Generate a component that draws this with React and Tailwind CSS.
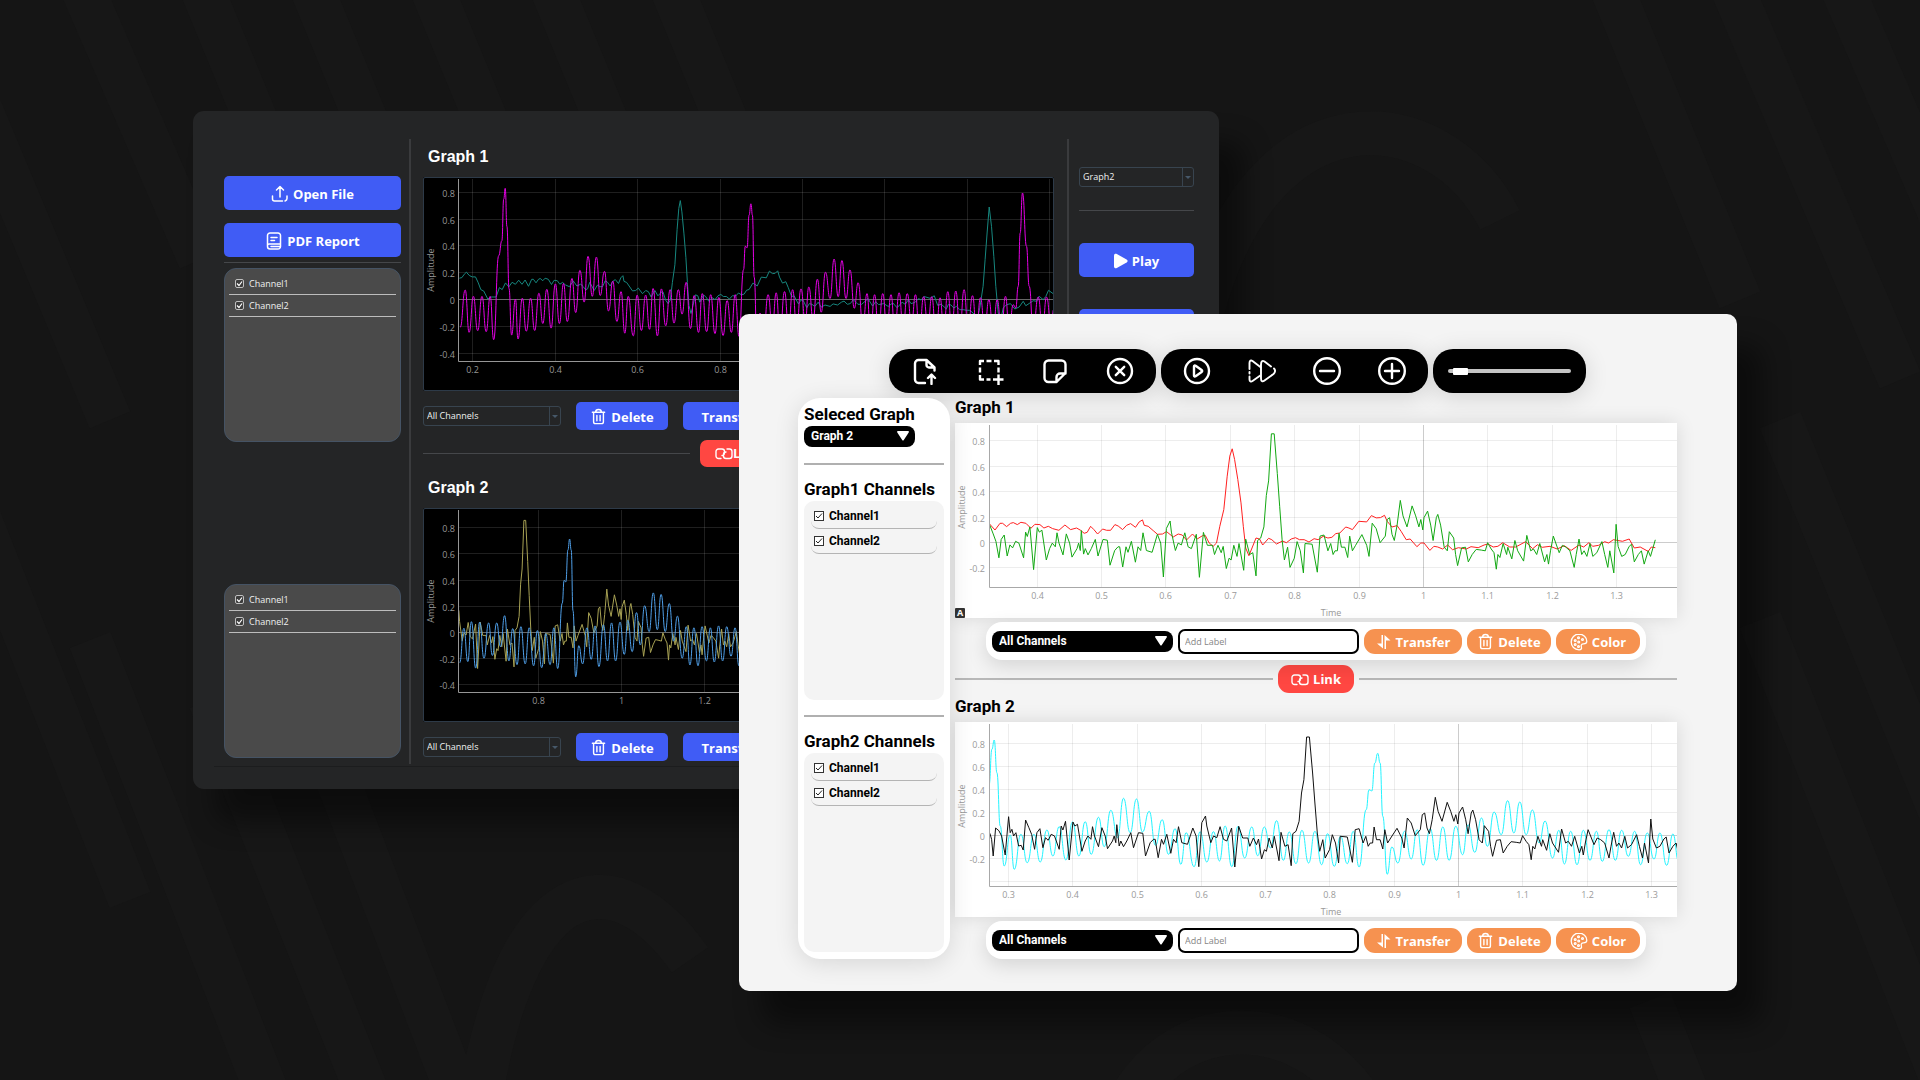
import React from "react";

/* ---------- signals: flat lists of x, y positions on a measured trace ---------- */

function fromTrace(list, tRef, xRef, xScale, yZero, yScale) {
  const out = [];
  for (let i = 0; i < list.length; i += 2) {
    out.push([tRef + (list[i] - xRef) / xScale, (yZero - list[i + 1]) / yScale]);
  }
  return out;
}

const SMOOTH = [
  [0.166, 0.155], [0.172, 0.16], [0.178, 0.185], [0.183, 0.2], [0.19, 0.175], [0.197, 0.165], [0.205, 0.165],
  [0.212, 0.12], [0.218, 0.07], [0.225, 0.06], [0.235, 0.0], [0.243, 0.015], [0.255, 0.015], [0.263, 0.085],
  [0.27, 0.07], [0.278, 0.12], [0.286, 0.09], [0.294, 0.125], [0.302, 0.11], [0.31, 0.14], [0.318, 0.11],
  ...fromTrace(
    [
      749, 643, 765, 661, 780, 641, 788, 641, 800, 651, 812, 641, 820, 639, 832, 645, 843, 638, 858, 641, 873, 656,
      885, 644, 900, 645, 912, 655, 925, 650, 938, 657, 957, 662, 975, 646, 992, 660, 1010, 655, 1022, 662, 1033, 671,
      1042, 668, 1052, 650, 1062, 660, 1073, 673, 1088, 658, 1100, 662, 1112, 662, 1125, 645, 1135, 649, 1148, 660,
      1160, 647, 1172, 642, 1187, 653, 1198, 637, 1208, 631, 1213, 647, 1225, 650, 1240, 663, 1253, 674, 1268, 673,
      1280, 666, 1300, 682, 1315, 673, 1327, 676, 1340, 691, 1358, 673, 1372, 688, 1388, 678, 1396, 677, 1408, 700,
      1420, 710, 1430, 700, 1440, 650, 1452, 600, 1462, 500, 1470, 440, 1477, 418,
    ],
    0.4, 893, 1933, 697, 380
  ),
  ...fromTrace(
    [
      264, 450, 272, 510, 280, 580, 286, 650, 292, 715, 300, 738, 308, 715, 318, 685, 327, 688, 335, 706, 350, 686,
      358, 690, 370, 703, 385, 694, 395, 699, 407, 688, 418, 684, 428, 690, 440, 690, 452, 697, 465, 687, 475, 690,
      488, 680, 500, 685, 510, 683, 520, 672, 530, 670, 545, 652, 553, 655, 562, 660, 578, 635, 598, 637, 610, 618,
      622, 625, 633, 624, 643, 617, 650, 635, 662, 652, 675, 648, 685, 665, 698, 690, 708, 688, 725, 711, 735, 700,
      743, 700, 758, 722, 768, 710, 778, 712, 790, 718, 803, 706, 815, 720, 830, 714, 850, 718, 862, 711, 880, 714,
      895, 706, 905, 703, 918, 712, 930, 710, 942, 699, 960, 712, 975, 712, 1000, 696, 1018, 717, 1030, 705,
      1042, 713, 1062, 710, 1080, 718, 1098, 708, 1115, 722, 1135, 706, 1147, 712, 1160, 699, 1170, 710, 1185, 707,
      1200, 696, 1210, 700, 1222, 690, 1245, 695, 1262, 688, 1275, 715, 1290, 712, 1310, 725, 1318, 712, 1328, 714,
    ],
    1, 743, 1629, 697, 380
  ),
  ...fromTrace(
    [
      642, 625, 650, 620, 660, 630, 670, 630, 682, 632, 690, 632, 700, 640, 712, 660, 720, 625, 730, 560, 736, 480,
      742, 400, 748, 322, 755, 380, 762, 470, 768, 560, 775, 640, 783, 660, 790, 625, 800, 615, 812, 612, 825, 628,
      838, 622, 850, 605, 858, 618, 870, 610, 880, 603, 890, 605, 898, 590, 910, 600, 918, 590, 926, 572, 940, 582,
    ],
    1, 190, 1235, 598, 402
  ),
];

const NOISY = [
  ...fromTrace(
    [
      749, 582, 754, 600, 759, 650, 766, 566, 776, 574, 784, 590, 795, 647, 805, 532, 810, 580, 815, 570, 820, 590,
      827, 580, 835, 620, 843, 618, 849, 632, 856, 542, 866, 565, 874, 585, 883, 630, 890, 580, 899, 568, 908, 625,
      916, 595, 924, 603, 933, 585, 943, 590, 957, 630, 963, 560, 968, 572, 976, 546, 987, 662, 998, 548, 1004, 560,
      1012, 555, 1025, 636, 1035, 605, 1043, 590, 1052, 600, 1057, 562, 1063, 590, 1075, 622, 1085, 565, 1095, 590,
      1102, 628, 1117, 605, 1122, 590, 1127, 610, 1130, 556, 1137, 620, 1142, 605, 1150, 622, 1160, 605, 1172, 580,
      1180, 625, 1195, 580, 1208, 582, 1216, 650, 1230, 610, 1240, 600, 1245, 600, 1254, 655, 1264, 600, 1270, 615,
      1280, 585, 1292, 642, 1300, 600, 1308, 610, 1315, 562, 1325, 610, 1342, 615, 1358, 566, 1368, 590, 1376, 682,
      1385, 550, 1396, 530, 1400, 560, 1412, 610, 1420, 590, 1430, 595, 1440, 562, 1450, 600, 1460, 605,
    ],
    0.3, 806, 1930, 587, 345
  ),
  ...fromTrace(
    [
      257, 595, 265, 712, 275, 590, 285, 625, 298, 625, 303, 650, 312, 625, 320, 645, 325, 628, 333, 688, 340, 660,
      345, 665, 352, 625, 360, 655, 365, 620, 377, 693, 382, 608, 392, 650, 400, 645, 408, 708, 412, 612, 420, 605,
      428, 575, 434, 490, 440, 450, 447, 322, 454, 322, 462, 430, 468, 520, 474, 610, 480, 665, 488, 630, 494, 685,
      505, 660, 512, 615, 520, 640, 528, 700, 532, 620, 550, 622, 563, 698, 570, 600, 580, 597, 590, 640, 597, 620,
      603, 650, 608, 640, 614, 640, 618, 592, 624, 630, 633, 630, 640, 658, 645, 600, 652, 640, 660, 625, 676, 596,
      688, 625, 694, 655, 702, 565, 712, 580, 722, 618, 735, 600, 740, 555, 746, 550, 752, 595, 758, 612, 765, 570,
      773, 503, 780, 545, 790, 575, 803, 518, 812, 545, 820, 575, 825, 555, 830, 583, 833, 550, 842, 532, 850, 570,
      856, 612, 864, 550, 868, 541, 875, 570, 884, 630, 892, 640, 897, 588, 908, 605, 913, 650, 918, 680, 928, 632,
      938, 630, 945, 670, 955, 650, 965, 636, 978, 638, 988, 640, 994, 618, 1003, 635, 1010, 645, 1016, 690,
      1020, 650, 1025, 658, 1033, 620, 1042, 650, 1045, 630, 1055, 662, 1063, 612, 1070, 640, 1085, 668, 1093, 598,
      1103, 640, 1110, 635, 1118, 650, 1126, 620, 1138, 670, 1144, 650, 1148, 676, 1153, 640, 1160, 600, 1175, 645,
      1183, 625, 1192, 630, 1202, 640, 1213, 685, 1218, 650, 1225, 608, 1232, 650, 1238, 640, 1245, 655, 1253, 620,
      1260, 655, 1270, 645, 1283, 615, 1290, 650, 1298, 685, 1303, 640, 1313, 700, 1319, 568, 1324, 628, 1333, 655,
      1342, 650, 1352, 628, 1358, 622, 1365, 670, 1375, 650, 1383, 640, 1390, 676, 1400, 640, 1406, 655, 1418, 610,
    ],
    1, 833, 1629, 616, 345
  ),
];

const RIPPLE = [
  ...fromTrace(
    [
      755, 685, 769, 573, 780, 700, 792, 592, 804, 695, 816, 592, 828, 698, 839, 592, 849, 722, 863, 470, 872, 425,
    ],
    0.2, 792, 1155, 600, 402
  ),
  ...fromTrace(
    [
      755, 330, 762, 302, 770, 400, 780, 560, 792, 680, 810, 587, 822, 690, 842, 585, 861, 670, 881, 585, 900, 668,
      920, 572, 938, 650, 957, 562, 977, 662, 997, 548, 1016, 650, 1035, 547, 1053, 645, 1075, 534, 1092, 622,
      1112, 513, 1132, 595, 1150, 477, 1170, 580, 1189, 479, 1207, 578, 1227, 516, 1246, 618, 1266, 541, 1285, 645,
      1305, 568, 1322, 675, 1338, 580, 1362, 682, 1380, 577, 1400, 668, 1420, 577, 1438, 665, 1455, 560, 1475, 682,
    ],
    0.3, 806, 1930, 587, 345
  ),
  ...fromTrace(
    [
      273, 590, 290, 685, 308, 592, 323, 678, 340, 592, 355, 655, 371, 573, 388, 692, 403, 607, 420, 702, 435, 602,
      452, 700, 468, 605, 485, 705, 500, 612, 517, 710, 533, 620, 550, 702, 565, 605, 580, 712, 598, 540, 605, 480,
      612, 484, 620, 400, 627, 371, 633, 400, 640, 560, 651, 734, 663, 652, 678, 700, 695, 605, 712, 688, 727, 600,
      742, 707, 760, 597, 776, 692, 792, 592, 808, 692, 825, 590, 842, 675, 856, 585, 873, 668, 890, 565, 905, 650,
      922, 547, 940, 615, 956, 513, 972, 610, 987, 517, 1003, 615, 1019, 541, 1036, 640, 1051, 574, 1070, 685,
      1086, 602, 1100, 703, 1116, 605, 1132, 705, 1148, 602, 1165, 692, 1181, 605, 1196, 695, 1213, 600, 1229, 692,
      1245, 602, 1262, 680, 1278, 605, 1293, 705, 1310, 610, 1327, 688, 1342, 610, 1359, 707, 1375, 613,
    ],
    1, 833, 1629, 616, 345
  ),
  ...fromTrace(
    [
      612, 690, 624, 576, 636, 690, 648, 574, 660, 690, 673, 570, 685, 690, 698, 588, 710, 690, 722, 594, 735, 690,
      747, 600, 760, 690, 772, 600, 785, 690, 797, 590, 808, 690, 820, 615, 828, 625, 835, 560, 841, 400, 848, 280,
      860, 440, 868, 560, 880, 690, 895, 592, 908, 690, 920, 592, 935, 690, 941, 630,
    ],
    1, 190, 1235, 598, 402
  ),
];

function tracePath(points, chart, smooth) {
  const px = points
    .filter(([t]) => t >= chart.from - 0.012 && t <= chart.to)
    .map(([t, v]) => [chart.x1 + 1 + (t - 1) * chart.xUnit, chart.y0 - v * chart.yUnit]);
  return px
    .map(([x, y], i) => {
      if (i === 0) return `M${x.toFixed(1)} ${y.toFixed(1)}`;
      if (!smooth) return `L${x.toFixed(1)} ${y.toFixed(1)}`;
      const [a, b] = px[i - 1];
      const m = (a + x) / 2;
      return `C${m.toFixed(1)} ${b.toFixed(1)} ${m.toFixed(1)} ${y.toFixed(1)} ${x.toFixed(1)} ${y.toFixed(1)}`;
    })
    .join("");
}

const DARK = {
  w: 631, h: 214, axisX: 35, axisY: 184, labelX: 32, plate: "#000000", grid: "#ffffff", gridOpacity: 0.12,
  strong: 0.4, axis: "#969696", text: "#969696", ampX: 11, ampY: 93,
};
const LIGHT = {
  w: 722, h: 195, axisX: 34, axisY: 164, labelX: 30, plate: "#ffffff", grid: "#000000", gridOpacity: 0.07,
  strong: 0.2, axis: "#a8a8a8", text: "#9a9a9a", ampX: 10, ampY: 84, time: true,
};
const FULL_Y = [-0.4, -0.2, 0, 0.2, 0.4, 0.6, 0.8];

const CHARTS = {
  dark1: {
    ...DARK, x1: 379, xUnit: 412, y0: 122, yUnit: 134, from: 0.175, to: 1.615,
    xTicks: [0.2, 0.4, 0.6, 0.8, 1, 1.2, 1.4, 1.6], yTicks: FULL_Y,
    series: [{ data: SMOOTH, color: "#17877f" }, { data: RIPPLE, color: "#e600e6", smooth: true }],
  },
  dark2: {
    ...DARK, x1: 198, xUnit: 414, y0: 124, yUnit: 131, from: 0.615, to: 1.36,
    xTicks: [0.8, 1, 1.2], yTicks: FULL_Y,
    series: [{ data: NOISY, color: "#a8a254" }, { data: RIPPLE, color: "#4f9fe8", smooth: true }],
  },
  light1: {
    ...LIGHT, x1: 468, xUnit: 644, y0: 119, yUnit: 127, from: 0.336, to: 1.361,
    xTicks: [0.4, 0.5, 0.6, 0.7, 0.8, 0.9, 1, 1.1, 1.2, 1.3], yTicks: FULL_Y.slice(1), auto: true,
    series: [{ data: SMOOTH, color: "#ff2020" }, { data: NOISY, color: "#12a812" }],
  },
  light2: {
    ...LIGHT, x1: 503, xUnit: 643, y0: 113, yUnit: 115, from: 0.28, to: 1.36,
    xTicks: [0.3, 0.4, 0.5, 0.6, 0.7, 0.8, 0.9, 1, 1.1, 1.2, 1.3], yTicks: FULL_Y, hideLowest: true,
    series: [{ data: RIPPLE, color: "#22f4ff", smooth: true }, { data: NOISY, color: "#111111" }],
  },
};

function Chart({ id, className }) {
  const c = CHARTS[id];
  const X = (t) => Math.round(c.x1 + (t - 1) * c.xUnit) + 0.5;
  const Y = (v) => Math.round(c.y0 - v * c.yUnit) + 0.5;
  return (
    <svg viewBox={`0 0 ${c.w} ${c.h}`} className={className} role="img" aria-label="Amplitude">
      <rect width={c.w} height={c.h} fill={c.plate} />
      <defs>
        <clipPath id={`clip-${id}`}>
          <rect x={c.axisX} y="1" width={c.w - c.axisX} height={c.axisY - 1} />
        </clipPath>
      </defs>
      <g stroke={c.grid}>
        {c.xTicks.map((t) => (
          <line key={t} x1={X(t)} x2={X(t)} y1="2" y2={c.axisY} strokeOpacity={t === 1 && c.time ? c.strong : c.gridOpacity} />
        ))}
        {c.yTicks.map((v) => (
          <line key={v} x1={c.axisX} x2={c.w} y1={Y(v)} y2={Y(v)} strokeOpacity={v === 0 ? c.strong : c.gridOpacity} />
        ))}
      </g>
      <g clipPath={`url(#clip-${id})`} fill="none" strokeWidth="1" strokeLinejoin="round">
        {c.series.map((s) => (
          <path key={s.color} d={tracePath(s.data, c, s.smooth)} stroke={s.color} />
        ))}
      </g>
      <path d={`M${c.axisX + 0.5} 2V${c.axisY + 0.5}H${c.w}`} fill="none" stroke={c.axis} />
      <g fill={c.text} fontSize="9" fontFamily="Open Sans, sans-serif">
        {c.xTicks.filter((t) => X(t) < c.w - 10).map((t) => (
          <text key={t} x={X(t)} y={c.axisY + 12} textAnchor="middle">{t}</text>
        ))}
        {c.yTicks.filter((v) => !(c.hideLowest && v === -0.4)).map((v) => (
          <text key={v} x={c.labelX} y={Y(v) + 4} textAnchor="end">{v}</text>
        ))}
        <text transform={`translate(${c.ampX} ${c.ampY}) rotate(-90)`} textAnchor="middle">Amplitude</text>
        {c.time && <text x="376" y="193" textAnchor="middle">Time</text>}
      </g>
      {c.auto && (
        <g>
          <rect x="0" y="185" width="10" height="10" rx="1" fill="#333333" />
          <text x="5" y="193" fontSize="9" fontWeight="700" fill="#ffffff" textAnchor="middle" fontFamily="Open Sans, sans-serif">A</text>
        </g>
      )}
    </svg>
  );
}

/* ---------- icons ---------- */

function Icon({ size, box = 28, width = 2, className = "", children }) {
  return (
    <svg
      width={size} height={size} viewBox={`0 0 ${box} ${box}`} className={`shrink-0 ${className}`} fill="none"
      stroke="currentColor" strokeWidth={width} strokeLinecap="round" strokeLinejoin="round" aria-hidden="true"
    >
      {children}
    </svg>
  );
}

const UploadIcon = () => (
  <Icon size={18} box={18} width={1.5}>
    <path d="M9 12V2M5.5 5 9 1.500l3.500 3.500M1.500 11v3a2 2 0 0 0 2 2h8M14 16c1.200-.5 2-1.500 2-2.500V11" />
  </Icon>
);
const ReportIcon = () => (
  <Icon size={18} box={18} width={1.5}>
    <path d="M2.500 14.500V3.500a2.500 2.500 0 0 1 2.500-2.500h8a2.500 2.500 0 0 1 2.500 2.500v11a2.500 2.500 0 0 1-2.500 2.500H5a2.500 2.500 0 0 1-2.500-2.500ZM2.500 13.500a1.500 1.500 0 0 1 1.500-1.500h11.500M6 5.500h6M6 8.500h3.500M6 14.500h9" />
  </Icon>
);
const TrashIcon = () => (
  <Icon size={17} box={18} width={1.5}>
    <path d="M2.500 4.500h13M6 4.200C6 2 7 1.500 9 1.500s3 .5 3 2.700M3.800 4.500v10a2 2 0 0 0 2 2h6.400a2 2 0 0 0 2-2v-10M7.300 8v5.500M10.700 8v5.500" />
  </Icon>
);
const SwapIcon = () => (
  <Icon size={16} box={16} width={1.5}>
    <path d="M7 1V14.500L1 9.500H5.500V1Z" fill="currentColor" stroke="none" />
    <path d="M8.500 15V1L14.500 6.500H10V15Z" fill="currentColor" stroke="none" />
  </Icon>
);
const PaletteIcon = () => (
  <Icon size={18} box={18} width={1.3}>
    <path d="M9 1.200C4.500 1.200 1.200 4.600 1.200 9s3.300 7.800 7.800 7.800c2.200 0 2.900-1.200 2.400-2.700-.7-2 .2-3.200 2-3.200 2 0 3.400-.6 3.400-2.600C16.800 4.200 13.300 1.200 9 1.200Z" />
    <circle cx="8.500" cy="4.800" r=".9" />
    <circle cx="12.500" cy="6.500" r=".9" />
    <circle cx="5.200" cy="7.500" r=".9" />
    <circle cx="5.200" cy="11.500" r=".9" />
    <circle cx="8.700" cy="9" r=".9" />
    <circle cx="8.500" cy="13.500" r=".9" />
  </Icon>
);
const ChainIcon = () => (
  <Icon size={18} box={18} width={1.4}>
    <path d="M6 13.500H3.500A2.500 2.500 0 0 1 1 11V6.500A2.500 2.500 0 0 1 3.500 4H7a2.500 2.500 0 0 1 2.500 2.500V8A2.500 2.500 0 0 1 7 10.500M12 4h2.500A2.500 2.500 0 0 1 17 6.500V11a2.500 2.500 0 0 1-2.500 2.500H11A2.500 2.500 0 0 1 8.500 11V9.500A2.500 2.500 0 0 1 11 7" />
  </Icon>
);
const PlaySolid = () => (
  <svg width="14" height="16" viewBox="0 0 14 16" fill="currentColor" aria-hidden="true">
    <path d="M0 2.500C0 1 1.500.3 2.800 1l9.800 5.500c1.400.8 1.400 2.200 0 3L2.800 15C1.500 15.700 0 15 0 13.500Z" />
  </svg>
);

const TOOLS_A = [
  ["Open file", <path d="M14 26H7.500A3.500 3.500 0 0 1 4 22.500v-16A3.500 3.500 0 0 1 7.500 3h8l8 7.500v3M15.500 3v5a2.500 2.500 0 0 0 2.500 2.500h5.500M20.500 27v-9M17 21l3.500-3.500L24 21" />],
  ["Select area", <g strokeLinecap="butt"><path d="M4 8V4h4M10.500 4h5M18 4h4.500v4M22.500 10.500v5M4 10.500v5M4 18v4.500h4M10.500 22.500h4M17 22.500h10.500M22.500 17.500v10.500" /></g>],
  ["Note", <path d="M15.500 25H7.500a4 4 0 0 1-4-4V7.500a4 4 0 0 1 4-4h13a4 4 0 0 1 4 4v8.500L15.500 25v-5a3.500 3.500 0 0 1 3.500-3.500h5.500" />],
  ["Close", <g><circle cx="14" cy="14" r="12" /><path d="m9.800 9.800 8.400 8.400m0-8.400-8.400 8.400" /></g>],
];
const TOOLS_B = [
  ["Play", <g><circle cx="14" cy="14" r="12" /><path d="M11 9.500v9c0 1 .8 1.300 1.600.8l6-4.200c.8-.6.8-1.500 0-2.100l-6-4.300c-.8-.5-1.600-.2-1.600.8Z" /></g>],
  ["Fast forward", <g strokeWidth="1.900"><path d="M1.500 12V6C1.500 3.500 3 3 4.500 4L13 10.500M1.500 15v1.500M1.500 19.500v3c0 2 1.500 2.500 3 1.500L13 18M13 7.500v14c0 3 1.500 3.500 3.500 2l9-6.500c2-1.700 2-4 .5-5.500M23 9.500 16.500 4.500C14.500 3.200 13 4 13 7.500" /></g>],
  ["Zoom out", <g><circle cx="14" cy="14" r="12.800" /><path d="M7 14h14" /></g>],
  ["Zoom in", <g><circle cx="14" cy="14" r="12.800" /><path d="M7 14h14M14 7v14" /></g>],
];

/* ---------- dark window ---------- */

function BlueButton({ className, children }) {
  return (
    <button
      type="button"
      className={`flex items-center justify-center gap-1 rounded-[5px] bg-[#405cf5] pt-px font-['Open_Sans',sans-serif] text-[13px] leading-5 font-bold text-white ${className}`}
    >
      {children}
    </button>
  );
}

function DarkSelect({ label, value, className }) {
  return (
    <div className={`relative h-5 rounded-[3px] border border-[#38444f] ${className}`}>
      <select
        aria-label={label}
        className="block h-full w-full appearance-none bg-transparent pl-[3px] font-['Open_Sans',sans-serif] text-[9px] text-[#f0f0f0]"
      >
        <option>{value}</option>
      </select>
      <span className="pointer-events-none absolute inset-y-0 right-0 flex w-[11px] items-center justify-center border-l border-[#38444f]">
        <svg width="6" height="3" viewBox="0 0 6 3" aria-hidden="true"><path d="M0 0h6L3 3Z" fill="#465869" /></svg>
      </span>
    </div>
  );
}

function DarkList() {
  return (
    <ul className="h-[174px] w-full rounded-[12px] border border-[#455364] bg-[#4a4a4a] px-1 pt-1">
      {["Channel1", "Channel2"].map((name) => (
        <li key={name} className="flex h-[22px] items-center border-b border-[#bdbdbd] pl-[6px]">
          <label className="flex items-center gap-[5px] font-['Open_Sans',sans-serif] text-[9px] text-[#f0f0f0]">
            <span className="relative flex h-[9px] w-[9px]">
              <input type="checkbox" defaultChecked className="h-[9px] w-[9px] appearance-none rounded-[2px] border border-[#c0c0c0] bg-[#3c3c3c]" />
              <svg className="pointer-events-none absolute inset-0" viewBox="0 0 9 9" fill="none" stroke="#ffffff" strokeWidth="1.200" aria-hidden="true"><path d="m2 4.500 2 2L7 2.500" /></svg>
            </span>
            {name}
          </label>
        </li>
      ))}
    </ul>
  );
}

function DarkGraph({ title, id }) {
  return (
    <section>
      <h2 className="h-[38px] pl-[5px] font-['Liberation_Sans',sans-serif] text-[16px] leading-9 font-bold text-white">{title}</h2>
      <Chart id={id} className="block w-full rounded-[2px] outline-1 -outline-offset-1 outline-[#2d3a48]" />
      <div className="mt-[11px] flex items-center">
        <DarkSelect label={`${title} channel`} value="All Channels" className="w-[138px]" />
        <BlueButton className="ml-[15px] h-7 w-[92px]"><TrashIcon />Delete</BlueButton>
        <BlueButton className="ml-[15px] h-7 w-[92px]">Transfer</BlueButton>
      </div>
    </section>
  );
}

function DarkWindow() {
  return (
    <div className="absolute top-[111px] right-[701px] left-[193px] rounded-[11px] bg-[#242526] px-[21px] pt-7 pb-[22px] shadow-[24px_32px_28px_rgba(0,0,0,0.45)]">
      <div className="flex border-b border-[#1c1d1e]">
        <aside className="mb-[2px] flex w-[197px] flex-col border-r-2 border-[#3a3b3d] pt-[37px] pr-2 pb-[6px] pl-[10px]">
          <BlueButton className="h-[34px] w-full"><UploadIcon />Open File</BlueButton>
          <BlueButton className="mt-[13px] h-[34px] w-full"><ReportIcon />PDF Report</BlueButton>
          <hr className="mt-[5px] mb-[5px] border-[#45474a]" />
          <DarkList />
          <div className="mt-auto"><DarkList /></div>
        </aside>
        <div className="flex-1 pr-[13px] pb-[5px] pl-3">
          <DarkGraph title="Graph 1" id="dark1" />
          <div className="mt-[10px] mb-[3px] flex items-center gap-[10px]">
            <hr className="flex-1 border-[#45474a]" />
            <button type="button" className="flex h-[27px] w-[77px] items-center justify-start rounded-[7px] bg-[#ff4742] pl-[15px] font-['Open_Sans',sans-serif] text-[13px] font-bold text-white">
              <ChainIcon />Link
            </button>
            <hr className="flex-1 border-[#45474a]" />
          </div>
          <DarkGraph title="Graph 2" id="dark2" />
        </div>
        <aside className="mb-[2px] flex w-[131px] flex-col border-l-2 border-[#3a3b3d] pt-7 pr-1 pl-[10px]">
          <DarkSelect label="Graph" value="Graph2" className="w-full" />
          <hr className="mt-[23px] mb-8 border-[#45474a]" />
          <BlueButton className="h-[34px] w-full"><PlaySolid />Play</BlueButton>
          <div className="mt-8 h-[34px] rounded-[5px] bg-[#405cf5]" />
        </aside>
      </div>
    </div>
  );
}

/* ---------- light window ---------- */

function Pill({ tools, children, className }) {
  return (
    <div className={`flex h-[44px] items-center rounded-[20px] bg-black px-1 text-white shadow-[0_4px_24px_rgba(0,0,0,0.14)] ${className}`}>
      {tools && tools.map(([name, art]) => (
        <button key={name} type="button" aria-label={name} className="flex flex-1 items-center justify-center">
          <Icon size={28} width={2.4}>{art}</Icon>
        </button>
      ))}
      {children}
    </div>
  );
}

function BlackSelect({ label, value, className }) {
  return (
    <div className={`relative h-[21px] rounded-[8px] bg-black ${className}`}>
      <select
        aria-label={label}
        className="block h-5 w-full appearance-none bg-transparent pl-[7px] font-['Roboto',sans-serif] text-[12px] leading-5 font-bold text-white"
      >
        <option>{value}</option>
      </select>
      <svg className="pointer-events-none absolute top-[5px] right-[6px]" width="12" height="10" viewBox="0 0 12 10" aria-hidden="true">
        <path d="M1 0h10c1 0 1.200.8.700 1.500L6.800 9c-.5.800-1.100.8-1.600 0L.3 1.500C-.2.8 0 0 1 0Z" fill="#ffffff" />
      </svg>
    </div>
  );
}

const HEADING = "h-5 font-['Roboto',sans-serif] text-[17px] leading-5 font-bold whitespace-nowrap text-black";

function LightList() {
  return (
    <ul className="mt-[2px] h-[199px] rounded-[10px] bg-[#f4f4f4] px-[7px] pt-[3px]">
      {["Channel1", "Channel2"].map((name) => (
        <li key={name} className="flex h-[25px] items-center rounded-[8px] border-b border-[#b4b4b4] pl-[3px]">
          <label className="flex items-center gap-[5px] font-['Roboto',sans-serif] text-[12px] leading-4 font-bold text-black">
            <span className="relative flex h-[10px] w-[10px]">
              <input type="checkbox" defaultChecked className="h-[10px] w-[10px] appearance-none border border-[#333333] bg-white" />
              <svg className="pointer-events-none absolute inset-0" viewBox="0 0 10 10" fill="none" stroke="#222222" aria-hidden="true"><path d="m2 5 2 2 4-4.500" /></svg>
            </span>
            {name}
          </label>
        </li>
      ))}
    </ul>
  );
}

function OrangeButton({ className, children }) {
  return (
    <button
      type="button"
      className={`flex h-[25px] items-center justify-center gap-1 rounded-[11px] bg-[#f69250] pt-px font-['Open_Sans',sans-serif] text-[13px] leading-5 font-bold text-white ${className}`}
    >
      {children}
    </button>
  );
}

function LightGraph({ title, id }) {
  return (
    <section className="flex flex-col">
      <h2 className="mb-[6px] h-[19px] font-['Roboto',sans-serif] text-[17px] leading-[19px] font-bold text-black">{title}</h2>
      <Chart id={id} className="block w-full shadow-[0_0_18px_rgba(0,0,0,0.12)]" />
      <div className="relative mt-1 flex h-[38px] items-center gap-[5px] self-center rounded-[16px] bg-white px-[6px] shadow-[0_6px_20px_rgba(0,0,0,0.13)]">
        <BlackSelect label={`${title} channel`} value="All Channels" className="w-[181px]" />
        <input
          type="text" aria-label={`${title} label`} placeholder="Add Label"
          className="h-[25px] w-[181px] rounded-[7px] border-2 border-black bg-white pl-[5px] font-['Open_Sans',sans-serif] text-[9px] text-black placeholder:text-[#858585]"
        />
        <OrangeButton className="w-[98px]"><SwapIcon />Transfer</OrangeButton>
        <OrangeButton className="w-[84px]"><TrashIcon />Delete</OrangeButton>
        <OrangeButton className="w-[84px]"><PaletteIcon />Color</OrangeButton>
      </div>
    </section>
  );
}

function LightWindow() {
  return (
    <div className="absolute top-[314px] right-[183px] left-[739px] rounded-[10px] bg-[#f4f4f4] pt-[35px] pr-[60px] pb-8 pl-[59px] shadow-[24px_32px_28px_rgba(0,0,0,0.45)]">
      <div className="flex justify-center gap-[5px]">
        <Pill tools={TOOLS_A} className="w-[267px]" />
        <Pill tools={TOOLS_B} className="w-[267px]" />
        <Pill className="w-[153px]">
          <input
            type="range" aria-label="Speed" defaultValue="5"
            className="mx-[11px] h-1 w-full appearance-none rounded-[2px] bg-[#c4c4c4] [&::-webkit-slider-thumb]:h-[7px] [&::-webkit-slider-thumb]:w-[15px] [&::-webkit-slider-thumb]:appearance-none [&::-webkit-slider-thumb]:rounded-[1px] [&::-webkit-slider-thumb]:bg-white"
          />
        </Pill>
      </div>
      <div className="mt-[5px] flex gap-[5px]">
        <aside className="relative w-[152px] self-start rounded-[22px] bg-white px-[6px] pt-[6px] pb-[7px] shadow-[0_4px_24px_rgba(0,0,0,0.12)]">
          <h2 className={HEADING}>Seleced Graph</h2>
          <BlackSelect label="Seleced Graph" value="Graph 2" className="mt-[2px] w-[111px]" />
          <hr className="mt-4 mb-[14px] border-t-2 border-[#b0b0b0]" />
          <h2 className={HEADING}>Graph1 Channels</h2>
          <LightList />
          <hr className="mt-[15px] mb-[14px] border-t-2 border-[#b0b0b0]" />
          <h2 className={HEADING}>Graph2 Channels</h2>
          <LightList />
        </aside>
        <div className="flex-1">
          <LightGraph title="Graph 1" id="light1" />
          <div className="mt-[5px] mb-1 flex items-center gap-[5px]">
            <hr className="flex-1 border-t-2 border-[#b8b8b8]" />
            <button type="button" className="flex h-7 w-[76px] items-center justify-center gap-1 rounded-[11px] bg-[#ff4742] pt-px font-['Open_Sans',sans-serif] text-[13px] font-bold text-white">
              <ChainIcon />Link
            </button>
            <hr className="flex-1 border-t-2 border-[#b8b8b8]" />
          </div>
          <LightGraph title="Graph 2" id="light2" />
        </div>
      </div>
    </div>
  );
}

/* ---------- backdrop ---------- */

function Backdrop() {
  return (
    <svg className="absolute inset-0 h-full w-full" viewBox="0 0 1920 1080" preserveAspectRatio="xMidYMid slice" aria-hidden="true">
      <g fill="none" stroke="#171717" strokeWidth="44">
        <path d="M-40 60 110 420M70 -40 200 260M190 -40 330 300M300 -40 440 300M420 -40 560 300M540 -40 680 300M660 -40 800 300" />
        <path d="M-20 520 130 900M90 640 270 1100M210 700 370 1100M330 760 460 1100M690 960C620 860 520 860 480 1100" />
        <path d="M1500 220C1440 100 1260 80 1200 320M1600 -40 1740 300M1720 -40 1900 380M1830 -40 1960 260" />
        <path d="M1780 420 1960 860M1760 620 1950 1100M1650 1000 1690 1100M1130 1100C1180 1010 1300 1010 1360 1100" />
      </g>
    </svg>
  );
}

export default function App() {
  return (
    <main className="relative min-h-screen overflow-hidden bg-[#151515]">
      <Backdrop />
      <DarkWindow />
      <LightWindow />
    </main>
  );
}
